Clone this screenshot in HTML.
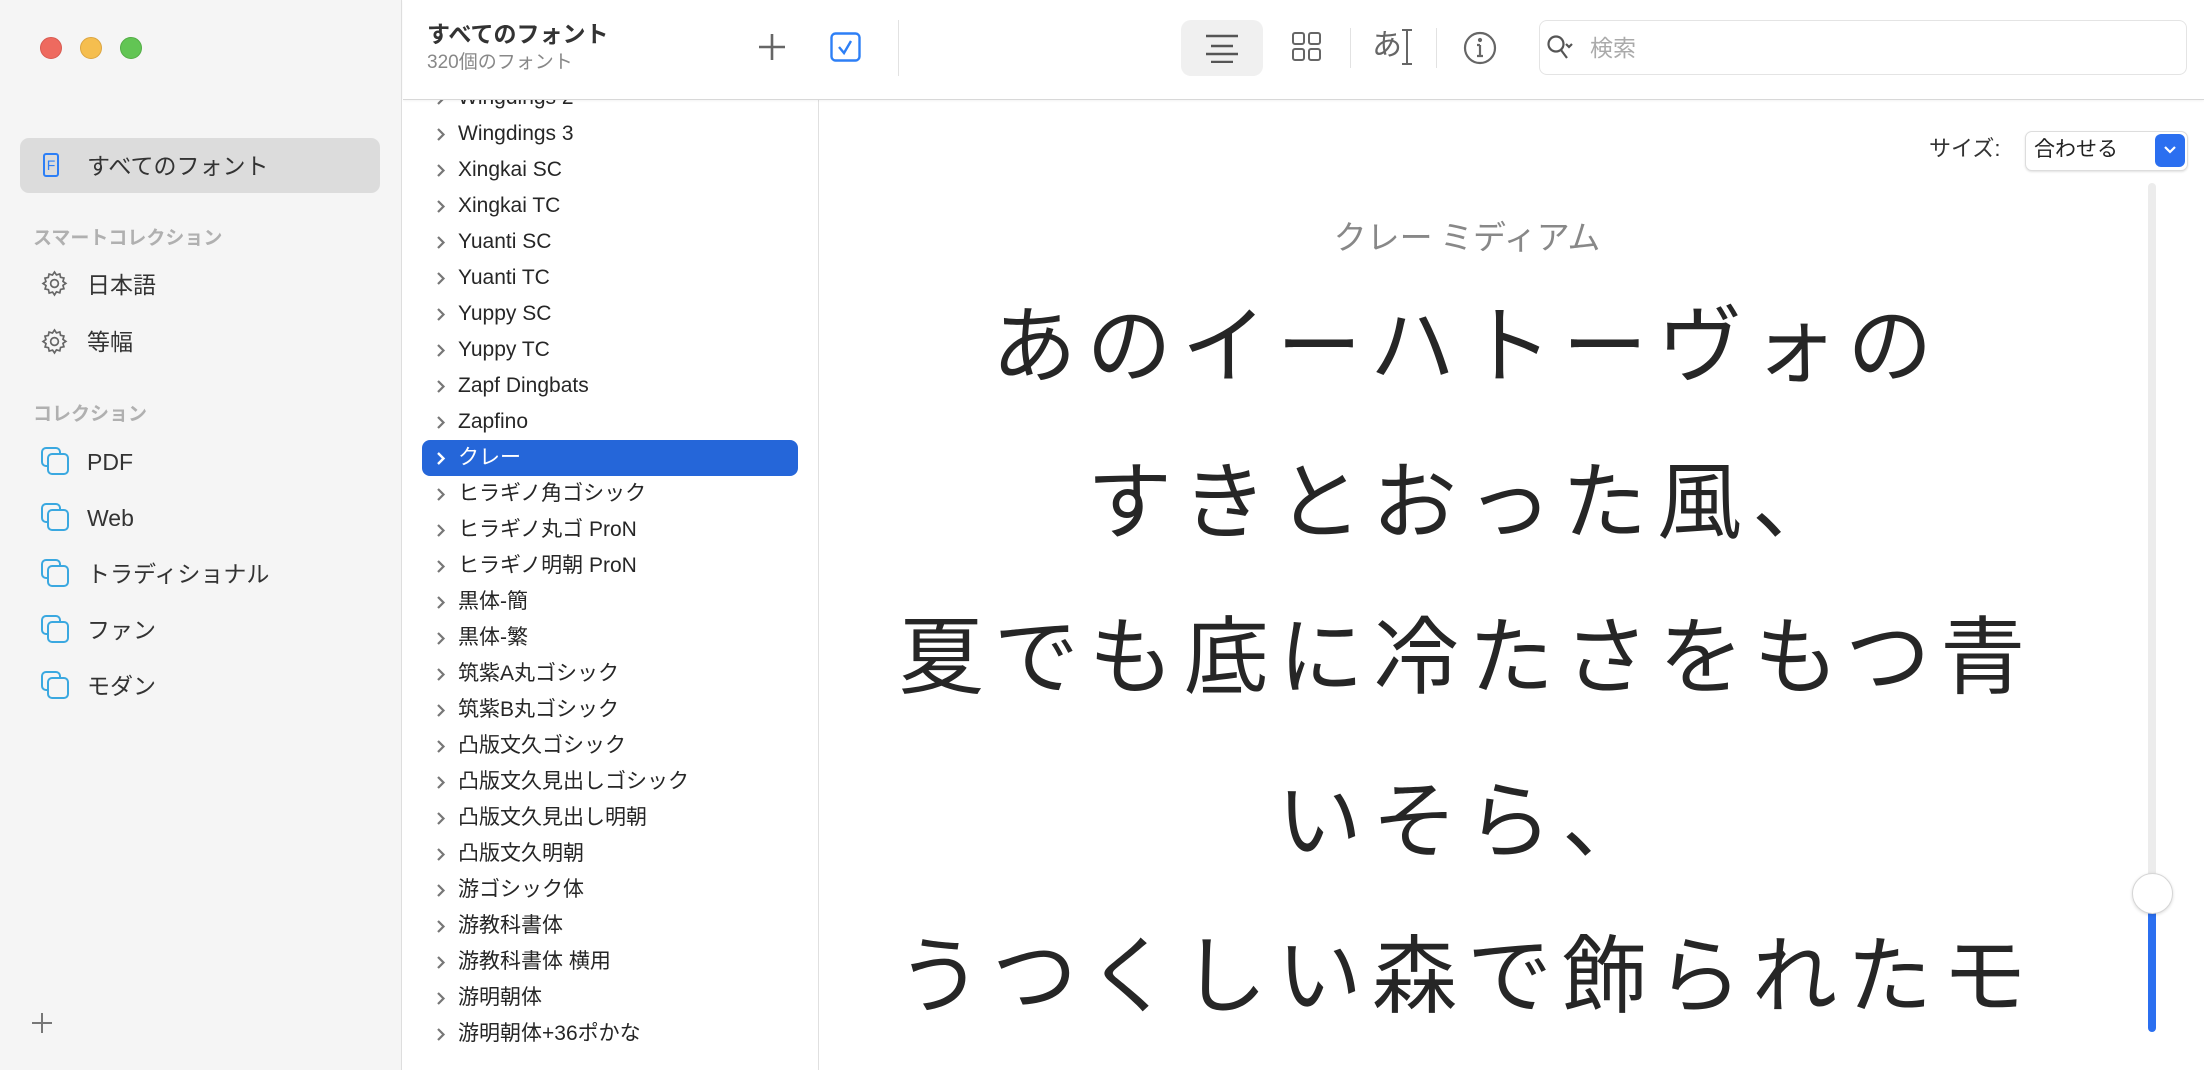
<!DOCTYPE html>
<html><head><meta charset="utf-8">
<style>
*{margin:0;padding:0;box-sizing:border-box}
body{width:2204px;height:1070px;overflow:hidden;background:#fff;font-family:"Liberation Sans","Noto Sans CJK JP",sans-serif;position:relative;color:#262626}
.abs{position:absolute}
#side{left:0;top:0;width:402px;height:1070px;background:#f5f5f5;border-right:1px solid #dedede}
.tl{position:absolute;top:37px;width:22px;height:22px;border-radius:50%}
.sitem{position:absolute;left:87px;font-size:23px;color:#333;line-height:30px}
.shead{position:absolute;left:33px;font-size:19px;color:#b0b0b0;font-weight:bold;line-height:24px}
.row{position:absolute;left:422px;width:376px;height:36px;font-size:21px;line-height:36px;color:#262626}
.row span.t{position:absolute;left:36px}
.row svg{position:absolute;left:14px;top:11px}
.prev{position:absolute;left:820px;width:1294px;text-align:center;font-family:"Noto Sans CJK JP",sans-serif;font-weight:400;font-size:85px;letter-spacing:10px;color:#262626;line-height:100px;white-space:nowrap}
</style></head><body>
<div id="side" class="abs"></div>
<div class="tl" style="left:40px;background:#ee6a5f;border:1px solid #d85a50"></div>
<div class="tl" style="left:80px;background:#f5be4f;border:1px solid #dca540"></div>
<div class="tl" style="left:120px;background:#62c554;border:1px solid #52ad45"></div>

<div class="abs" style="left:20px;top:138px;width:360px;height:55px;background:#dcdcdc;border-radius:9px"></div>
<div class="abs" style="left:43px;top:153px;width:16px;height:24px;border:2px solid #2d7ff6;border-radius:3px;font-size:14px;color:#2d7ff6;text-align:center;line-height:20px">F</div>
<div class="sitem" style="top:151px">すべてのフォント</div>
<div class="shead" style="top:227px">スマートコレクション</div>
<svg class="abs" style="left:40px;top:269px" width="29" height="29" viewBox="0 0 24 24" fill="none" stroke="#666" stroke-width="1.4"><circle cx="12" cy="12" r="3.2"/><path d="M12 2.5l1.6 2.4 2.8-.8.6 2.8 2.8.6-.8 2.8 2.4 1.6-2.4 1.6.8 2.8-2.8.6-.6 2.8-2.8-.8L12 21.5l-1.6-2.4-2.8.8-.6-2.8-2.8-.6.8-2.8L2.5 12l2.4-1.6-.8-2.8 2.8-.6.6-2.8 2.8.8z"/></svg>
<div class="sitem" style="top:270px">日本語</div>
<svg class="abs" style="left:40px;top:327px" width="29" height="29" viewBox="0 0 24 24" fill="none" stroke="#666" stroke-width="1.4"><circle cx="12" cy="12" r="3.2"/><path d="M12 2.5l1.6 2.4 2.8-.8.6 2.8 2.8.6-.8 2.8 2.4 1.6-2.4 1.6.8 2.8-2.8.6-.6 2.8-2.8-.8L12 21.5l-1.6-2.4-2.8.8-.6-2.8-2.8-.6.8-2.8L2.5 12l2.4-1.6-.8-2.8 2.8-.6.6-2.8 2.8.8z"/></svg>
<div class="sitem" style="top:327px">等幅</div>
<div class="shead" style="top:403px">コレクション</div>
<svg class="abs" style="left:41px;top:447px" width="28" height="28" viewBox="0 0 28 28" fill="none" stroke="#3aa8e0" stroke-width="2"><rect x="1" y="1" width="18" height="18" rx="4"/><rect x="7" y="7" width="20" height="20" rx="4" fill="#f5f5f5"/></svg>
<div class="sitem" style="top:447px">PDF</div>
<svg class="abs" style="left:41px;top:503px" width="28" height="28" viewBox="0 0 28 28" fill="none" stroke="#3aa8e0" stroke-width="2"><rect x="1" y="1" width="18" height="18" rx="4"/><rect x="7" y="7" width="20" height="20" rx="4" fill="#f5f5f5"/></svg>
<div class="sitem" style="top:503px">Web</div>
<svg class="abs" style="left:41px;top:559px" width="28" height="28" viewBox="0 0 28 28" fill="none" stroke="#3aa8e0" stroke-width="2"><rect x="1" y="1" width="18" height="18" rx="4"/><rect x="7" y="7" width="20" height="20" rx="4" fill="#f5f5f5"/></svg>
<div class="sitem" style="top:559px">トラディショナル</div>
<svg class="abs" style="left:41px;top:615px" width="28" height="28" viewBox="0 0 28 28" fill="none" stroke="#3aa8e0" stroke-width="2"><rect x="1" y="1" width="18" height="18" rx="4"/><rect x="7" y="7" width="20" height="20" rx="4" fill="#f5f5f5"/></svg>
<div class="sitem" style="top:615px">ファン</div>
<svg class="abs" style="left:41px;top:671px" width="28" height="28" viewBox="0 0 28 28" fill="none" stroke="#3aa8e0" stroke-width="2"><rect x="1" y="1" width="18" height="18" rx="4"/><rect x="7" y="7" width="20" height="20" rx="4" fill="#f5f5f5"/></svg>
<div class="sitem" style="top:671px">モダン</div>
<svg class="abs" style="left:30px;top:1011px" width="24" height="24" viewBox="0 0 24 24" stroke="#777" stroke-width="2"><path d="M12 2v20M2 12h20"/></svg>

<div class="abs" style="left:818px;top:100px;width:1px;height:970px;background:#e0e0e0"></div>
<div class="abs" style="left:422px;top:440px;width:376px;height:36px;background:#2566d9;border-radius:8px"></div>
<div class="row" style="top:80px"><svg width="10" height="15" viewBox="0 0 10 15"><path d="M2 2l5.5 5.5L2 13" fill="none" stroke="#777" stroke-width="2.2"/></svg><span class="t">Wingdings 2</span></div>
<div class="row" style="top:116px"><svg width="10" height="15" viewBox="0 0 10 15"><path d="M2 2l5.5 5.5L2 13" fill="none" stroke="#777" stroke-width="2.2"/></svg><span class="t">Wingdings 3</span></div>
<div class="row" style="top:152px"><svg width="10" height="15" viewBox="0 0 10 15"><path d="M2 2l5.5 5.5L2 13" fill="none" stroke="#777" stroke-width="2.2"/></svg><span class="t">Xingkai SC</span></div>
<div class="row" style="top:188px"><svg width="10" height="15" viewBox="0 0 10 15"><path d="M2 2l5.5 5.5L2 13" fill="none" stroke="#777" stroke-width="2.2"/></svg><span class="t">Xingkai TC</span></div>
<div class="row" style="top:224px"><svg width="10" height="15" viewBox="0 0 10 15"><path d="M2 2l5.5 5.5L2 13" fill="none" stroke="#777" stroke-width="2.2"/></svg><span class="t">Yuanti SC</span></div>
<div class="row" style="top:260px"><svg width="10" height="15" viewBox="0 0 10 15"><path d="M2 2l5.5 5.5L2 13" fill="none" stroke="#777" stroke-width="2.2"/></svg><span class="t">Yuanti TC</span></div>
<div class="row" style="top:296px"><svg width="10" height="15" viewBox="0 0 10 15"><path d="M2 2l5.5 5.5L2 13" fill="none" stroke="#777" stroke-width="2.2"/></svg><span class="t">Yuppy SC</span></div>
<div class="row" style="top:332px"><svg width="10" height="15" viewBox="0 0 10 15"><path d="M2 2l5.5 5.5L2 13" fill="none" stroke="#777" stroke-width="2.2"/></svg><span class="t">Yuppy TC</span></div>
<div class="row" style="top:368px"><svg width="10" height="15" viewBox="0 0 10 15"><path d="M2 2l5.5 5.5L2 13" fill="none" stroke="#777" stroke-width="2.2"/></svg><span class="t">Zapf Dingbats</span></div>
<div class="row" style="top:404px"><svg width="10" height="15" viewBox="0 0 10 15"><path d="M2 2l5.5 5.5L2 13" fill="none" stroke="#777" stroke-width="2.2"/></svg><span class="t">Zapfino</span></div>
<div class="row" style="top:440px;color:#fff"><svg width="10" height="15" viewBox="0 0 10 15"><path d="M2 2l5.5 5.5L2 13" fill="none" stroke="#fff" stroke-width="2.4"/></svg><span class="t">クレー</span></div>
<div class="row" style="top:476px"><svg width="10" height="15" viewBox="0 0 10 15"><path d="M2 2l5.5 5.5L2 13" fill="none" stroke="#777" stroke-width="2.2"/></svg><span class="t">ヒラギノ角ゴシック</span></div>
<div class="row" style="top:512px"><svg width="10" height="15" viewBox="0 0 10 15"><path d="M2 2l5.5 5.5L2 13" fill="none" stroke="#777" stroke-width="2.2"/></svg><span class="t">ヒラギノ丸ゴ ProN</span></div>
<div class="row" style="top:548px"><svg width="10" height="15" viewBox="0 0 10 15"><path d="M2 2l5.5 5.5L2 13" fill="none" stroke="#777" stroke-width="2.2"/></svg><span class="t">ヒラギノ明朝 ProN</span></div>
<div class="row" style="top:584px"><svg width="10" height="15" viewBox="0 0 10 15"><path d="M2 2l5.5 5.5L2 13" fill="none" stroke="#777" stroke-width="2.2"/></svg><span class="t">黒体-簡</span></div>
<div class="row" style="top:620px"><svg width="10" height="15" viewBox="0 0 10 15"><path d="M2 2l5.5 5.5L2 13" fill="none" stroke="#777" stroke-width="2.2"/></svg><span class="t">黒体-繁</span></div>
<div class="row" style="top:656px"><svg width="10" height="15" viewBox="0 0 10 15"><path d="M2 2l5.5 5.5L2 13" fill="none" stroke="#777" stroke-width="2.2"/></svg><span class="t">筑紫A丸ゴシック</span></div>
<div class="row" style="top:692px"><svg width="10" height="15" viewBox="0 0 10 15"><path d="M2 2l5.5 5.5L2 13" fill="none" stroke="#777" stroke-width="2.2"/></svg><span class="t">筑紫B丸ゴシック</span></div>
<div class="row" style="top:728px"><svg width="10" height="15" viewBox="0 0 10 15"><path d="M2 2l5.5 5.5L2 13" fill="none" stroke="#777" stroke-width="2.2"/></svg><span class="t">凸版文久ゴシック</span></div>
<div class="row" style="top:764px"><svg width="10" height="15" viewBox="0 0 10 15"><path d="M2 2l5.5 5.5L2 13" fill="none" stroke="#777" stroke-width="2.2"/></svg><span class="t">凸版文久見出しゴシック</span></div>
<div class="row" style="top:800px"><svg width="10" height="15" viewBox="0 0 10 15"><path d="M2 2l5.5 5.5L2 13" fill="none" stroke="#777" stroke-width="2.2"/></svg><span class="t">凸版文久見出し明朝</span></div>
<div class="row" style="top:836px"><svg width="10" height="15" viewBox="0 0 10 15"><path d="M2 2l5.5 5.5L2 13" fill="none" stroke="#777" stroke-width="2.2"/></svg><span class="t">凸版文久明朝</span></div>
<div class="row" style="top:872px"><svg width="10" height="15" viewBox="0 0 10 15"><path d="M2 2l5.5 5.5L2 13" fill="none" stroke="#777" stroke-width="2.2"/></svg><span class="t">游ゴシック体</span></div>
<div class="row" style="top:908px"><svg width="10" height="15" viewBox="0 0 10 15"><path d="M2 2l5.5 5.5L2 13" fill="none" stroke="#777" stroke-width="2.2"/></svg><span class="t">游教科書体</span></div>
<div class="row" style="top:944px"><svg width="10" height="15" viewBox="0 0 10 15"><path d="M2 2l5.5 5.5L2 13" fill="none" stroke="#777" stroke-width="2.2"/></svg><span class="t">游教科書体 横用</span></div>
<div class="row" style="top:980px"><svg width="10" height="15" viewBox="0 0 10 15"><path d="M2 2l5.5 5.5L2 13" fill="none" stroke="#777" stroke-width="2.2"/></svg><span class="t">游明朝体</span></div>
<div class="row" style="top:1016px"><svg width="10" height="15" viewBox="0 0 10 15"><path d="M2 2l5.5 5.5L2 13" fill="none" stroke="#777" stroke-width="2.2"/></svg><span class="t">游明朝体+36ポかな</span></div>

<div class="abs" style="left:403px;top:0;width:1801px;height:100px;background:#fff;border-bottom:1px solid #d8d8d8;box-shadow:0 1px 2px rgba(0,0,0,0.05)"></div>
<div class="abs" style="left:427px;top:19px;font-size:23px;font-weight:bold;color:#333;line-height:30px">すべてのフォント</div>
<div class="abs" style="left:427px;top:50px;font-size:19px;color:#888;line-height:26px">320個のフォント</div>
<svg class="abs" style="left:758px;top:33px" width="28" height="28" viewBox="0 0 28 28" stroke="#666" stroke-width="2.6"><path d="M14 1v26M1 14h26"/></svg>
<svg class="abs" style="left:830px;top:32px" width="31" height="30" viewBox="0 0 31 30" fill="none" stroke="#2d7ff6" stroke-width="2.4"><rect x="1.5" y="1.5" width="28" height="27" rx="4"/><path d="M9 15l5 6 7-12"/></svg>
<div class="abs" style="left:898px;top:20px;width:1px;height:56px;background:#e2e2e2"></div>
<div class="abs" style="left:1181px;top:20px;width:82px;height:56px;background:#f0f0f0;border-radius:10px"></div>
<svg class="abs" style="left:1205px;top:33px" width="34" height="30" viewBox="0 0 34 30" stroke="#555" stroke-width="2.4"><path d="M1 3h32M6 13h22M1 21h32M6 29h22"/></svg>
<svg class="abs" style="left:1292px;top:32px" width="30" height="30" viewBox="0 0 30 30" fill="none" stroke="#666" stroke-width="2"><rect x="1" y="1" width="11" height="11" rx="2"/><rect x="17" y="1" width="11" height="11" rx="2"/><rect x="1" y="17" width="11" height="11" rx="2"/><rect x="17" y="17" width="11" height="11" rx="2"/></svg>
<div class="abs" style="left:1350px;top:28px;width:1px;height:40px;background:#e2e2e2"></div>
<div class="abs" style="left:1372px;top:26px;font-size:30px;color:#666;line-height:40px">あ</div>
<svg class="abs" style="left:1400px;top:29px" width="14" height="36" viewBox="0 0 14 36" stroke="#666" stroke-width="2"><path d="M2 1h10M7 1v34M2 35h10"/></svg>
<div class="abs" style="left:1436px;top:28px;width:1px;height:40px;background:#e2e2e2"></div>
<svg class="abs" style="left:1463px;top:31px" width="34" height="34" viewBox="0 0 34 34" fill="none" stroke="#666" stroke-width="2.2"><circle cx="17" cy="17" r="15"/><path d="M17 14v11M14 14h3M14 25h6"/><circle cx="17" cy="9" r="1" fill="#666"/></svg>
<div class="abs" style="left:1539px;top:20px;width:648px;height:55px;border:1px solid #e4e4e4;border-radius:8px;background:#fff"></div>
<svg class="abs" style="left:1546px;top:34px" width="30" height="30" viewBox="0 0 30 30" fill="none" stroke="#555" stroke-width="2.2"><circle cx="10" cy="10" r="7.5"/><path d="M15 16l6 8M20 10l3 3 3-3"/></svg>
<div class="abs" style="left:1590px;top:30px;font-size:23px;color:#aaa;line-height:36px">検索</div>

<div class="abs" style="left:1929px;top:133px;font-size:22px;color:#333;line-height:32px">サイズ:</div>
<div class="abs" style="left:2025px;top:131px;width:163px;height:40px;border:1px solid #ddd;border-radius:7px;background:#fff;box-shadow:0 1px 2px rgba(0,0,0,0.12)"></div>
<div class="abs" style="left:2034px;top:133px;font-size:21px;color:#222;line-height:34px">合わせる</div>
<div class="abs" style="left:2155px;top:134px;width:30px;height:33px;background:#2b6ff0;border-radius:6px"></div>
<svg class="abs" style="left:2163px;top:144px" width="14" height="12" viewBox="0 0 14 12" fill="none" stroke="#fff" stroke-width="2.2"><path d="M2 3l5 5 5-5"/></svg>

<div class="abs" style="left:2148px;top:183px;width:8px;height:710px;background:#ececec;border-radius:4px"></div>
<div class="abs" style="left:2148px;top:893px;width:8px;height:139px;background:#2b6ff0;border-radius:4px"></div>
<div class="abs" style="left:2132px;top:873px;width:41px;height:41px;border-radius:50%;background:#fff;border:1px solid #d6d6d6;box-shadow:0 1px 3px rgba(0,0,0,0.15)"></div>

<div class="abs" style="left:820px;width:1294px;top:213px;text-align:center;font-size:33px;color:#888;line-height:44px;font-family:'Noto Sans CJK JP',sans-serif">クレー ミディアム</div>
<div class="prev" style="top:290px">あのイーハトーヴォの</div>
<div class="prev" style="top:446px">すきとおった風、</div>
<div class="prev" style="top:601px">夏でも底に冷たさをもつ青</div>
<div class="prev" style="top:765px">いそら、</div>
<div class="prev" style="top:920px">うつくしい森で飾られたモ</div>
</body></html>
